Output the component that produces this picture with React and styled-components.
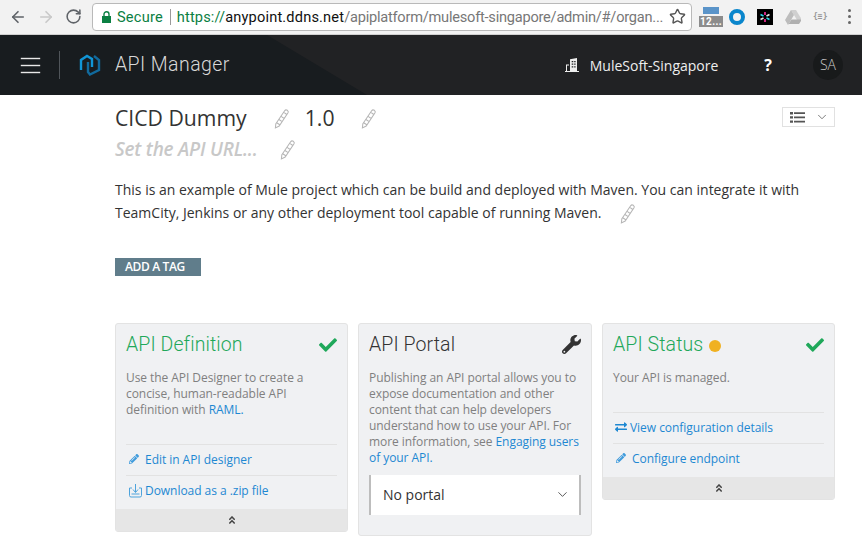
import React from "react";
import styled, { createGlobalStyle } from "styled-components";
import { ArrowLeft, ArrowRight, RotateCw, Star, ChevronDown } from "lucide-react";
import { FaCheck, FaWrench, FaExchangeAlt, FaAngleDoubleUp, FaPencilAlt } from "react-icons/fa";

const Global = createGlobalStyle`
  html, body { margin: 0; padding: 0; background: #fff; }
  body { font-family: "Open Sans", "Liberation Sans", sans-serif; width: 862px; height: 552px; overflow: hidden; }
  * { box-sizing: border-box; }
`;
const Page = styled.div`width: 862px; height: 552px; overflow: hidden; display: flex; flex-direction: column;`;
const Chrome = styled.div`height: 35px; flex: none; background: #f2f2f2; border-bottom: 1px solid #d0d0d0; display: flex; align-items: center; padding: 0 0 1px 9px;`;
const NavBtn = styled.div`width: 28px; display: flex; justify-content: flex-start; color: ${p => p.$c};`;
const Omni = styled.div`margin-left: -1px; width: 600px; height: 28px; flex: none; background: #fff; border: 1px solid #b9b9b9; border-radius: 4px; display: flex; align-items: center; padding: 0 5px 0 9px; font: 14.6px "Roboto", "Liberation Sans", sans-serif; white-space: nowrap;`;
const Secure = styled.span`color: #0b8043; margin-left: 6px; letter-spacing: .2px;`;
const Sep = styled.span`width: 1px; height: 16px; background: #9a9a9a; margin: 0 6px 0 7px;`;
const Url = styled.span`flex: 1; min-width: 0; color: #777; letter-spacing: -.23px; b { font-weight: 400; color: #111; letter-spacing: .17px; } i { font-style: normal; color: #0b8043; letter-spacing: .13px; }`;
const Exts = styled.div`display: flex; align-items: center; margin-left: 7px;`;
const Cal = styled.div`width: 24px; height: 20px; display: flex; flex-direction: column; align-items: center; margin-right: 6px;
  span { display: block; width: 16px; height: 7px; background: #5a94c9; }
  b { display: block; width: 24px; height: 11px; margin-top: 2px; background: #8c8c8c; color: #fff; font: 700 10px/11px "Roboto", sans-serif; letter-spacing: .4px; text-align: center; }`;
const ExtIcon = styled.div`width: ${p => p.$w || 16}px; height: 16px; margin-right: ${p => p.$m}px; display: flex; align-items: center; justify-content: center; svg { display: block; }`;
const ExtText = styled.span`font: 700 8px "DejaVu Sans Mono", monospace; color: #999; width: 15px; margin-right: 20px; white-space: nowrap;`;
const Dots = styled.div`display: flex; flex-direction: column; gap: 3px; span { width: 3px; height: 3px; border-radius: 50%; background: #666; }`;

const Header = styled.header`position: relative; height: 60px; flex: none; background: #212224; display: flex; align-items: center; padding: 0 19px 0 21px; color: #fff; overflow: hidden;
  &::before { content: ""; position: absolute; inset: 0; background: #181c1f; clip-path: polygon(0 0, 267px 0, 367px 60px, 0 60px); }
  > * { position: relative; }`;
const Burger = styled.div`width: 19px; display: flex; flex-direction: column; gap: 6px; span { display: block; height: 1px; background: #e8e8e8; box-shadow: 0 0 0 .2px #e8e8e8; }`;
const Divider = styled.div`width: 1px; height: 28px; background: #50555a; margin: 0 19px 0 19px;`;
const Brand = styled.div`font: 300 19.5px "Roboto", sans-serif; letter-spacing: .42px; color: #d8d8d8; margin-left: 14px; flex: 1; position: relative; top: -1px;`;
const Org = styled.div`font: 400 14px "Open Sans", sans-serif; color: #eee; margin-left: 11px;`;
const Help = styled.div`font: 700 16px "Open Sans", sans-serif; color: #fff; margin-left: 46px;`;
const Avatar = styled.div`width: 30px; height: 30px; border-radius: 50%; background: #181a1b; color: #ccc; margin-left: 41px; font: 300 14px/30px "Open Sans", sans-serif; text-align: center;`;

const Main = styled.main`padding: 0 27px 0 115px; flex: 1;`;
const TitleRow = styled.div`display: flex; align-items: center; height: 46px; position: relative;`;
const Title = styled.div`font: 400 21.2px/28px "Open Sans", sans-serif; color: #333; white-space: nowrap;`;
const Version = styled(Title)`margin-left: 14px;`;
const Pen = styled.svg`width: 19px; height: 21px; flex: none; margin-left: ${p => p.$m}px; fill: none; stroke: #b5b5b5; stroke-width: 1;`;
const Menu = styled.div`position: absolute; right: 0; top: 12px; width: 53px; height: 20px; border: 1px solid #e1e1e1; display: flex; align-items: center; gap: 10px; padding-left: 7px; color: #555;`;
const UrlRow = styled.div`display: flex; align-items: center; height: 22px; margin-top: -3px;`;
const UrlHint = styled.div`font: italic 600 18.9px/22px "Open Sans", sans-serif; color: #c8c8c8; letter-spacing: -.2px; white-space: nowrap;`;
const Desc = styled.p`margin: 18px 0 0; font: 400 14px/23px "Open Sans", sans-serif; color: #333; width: 720px; svg { vertical-align: -6px; }`;
const Tag = styled.div`margin-top: 34px; width: 86px; height: 18px; background: #607d8b; color: #fff; font: 600 12px/17px "Open Sans", sans-serif; padding-left: 10px; letter-spacing: -.35px;`;
const Cards = styled.div`display: grid; grid-template-columns: 233px 234px 233px; gap: 10px; align-items: start; margin-top: 47px; width: 720px;`;
const Card = styled.section`background: #f0f1f3; border: 1px solid #e3e3e3; border-radius: 3px; overflow: hidden;`;
const CardHead = styled.div`display: flex; align-items: center; justify-content: space-between; padding: 5px 10px 0; height: 36px;`;
const CardTitle = styled.h2`margin: 0; font: 300 19.5px/26px "Roboto", sans-serif; letter-spacing: .1px; color: ${p => p.$c}; display: flex; align-items: center; gap: 6px;`;
const Dot = styled.span`width: 12px; height: 12px; background: #f0b121; border-radius: 50%; display: block; margin-top: 2px;`;
const Body = styled.p`margin: 10px 8px 0 10px; font: 400 12px/16px "Open Sans", sans-serif; letter-spacing: -.06px; color: #808080; min-height: ${p => p.$h}px; a { color: #1e88d2; }`;
const Actions = styled.div`padding-bottom: 3px;`;
const ActionRow = styled.div`margin: 0 10px; height: 31px; border-top: 1px solid #e2e2e2; display: flex; align-items: center; gap: ${p => p.$g ?? 6}px; font: 400 12px "Open Sans", sans-serif; color: #1e88d2; padding: 0 0 2px ${p => p.$p ?? 2}px; letter-spacing: -.04px; svg { flex: none; }`;
const Collapse = styled.div`height: 22px; background: #e6e6e6; display: flex; align-items: center; justify-content: center; color: #444;`;
const Select = styled.div`margin: 9px 10px 20px; height: 40px; background: #fff; border-left: 2px solid #bdbdbd; border-right: 2px solid #bdbdbd; display: flex; align-items: center; justify-content: space-between; padding: 0 9px 2px 12px; font: 400 14px "Open Sans", sans-serif; color: #333;`;

const Pencil = ({ m }) => (
  <Pen $m={m} viewBox="0 0 18 20"><path d="M3.6 15 L12 2.6 Q13 1.2 14.6 2.2 Q16 3.3 15.2 4.6 L6.8 17.2 L3.2 19 Z M11 4 L14 6.2 M4.4 14 L7.4 16 M6.6 11 L9.6 13 M8.6 8 L11.6 10" /></Pen>
);
const GreenCheck = () => <FaCheck size={18} color="#1fa85a" />;
const Chevs = () => <FaAngleDoubleUp size={10} />;
const Logo = () => (
  <svg width="22" height="24" viewBox="0 0 22 24" fill="none" strokeWidth="2.4">
    <path d="M2 17 V7 L8 3 L13 6 V14" stroke="#1195d6" />
    <path d="M9 9 V19 L11 21.5 L20 17 V7 L15 3" stroke="#116a9d" />
  </svg>
);
const Building = () => (
  <svg width="14" height="14" viewBox="0 0 14 14" fill="#eee"><path d="M5 1.2 L12 0 V13 H5 Z M6.7 3 v1.2 h1.6 V3 Z M9.2 3 v1.2 h1.4 V3 Z M6.7 5.6 v1.2 h1.6 V5.6 Z M9.2 5.6 v1.2 h1.4 V5.6 Z M6.7 8.2 v1.2 h1.6 V8.2 Z M9.2 8.2 v1.2 h1.4 V8.2 Z" fillRule="evenodd" /><path d="M1 6.5 H4 V7.5 H2 V13 H4 V14 H1 Z M0 13 H14 V14 H0 Z" /></svg>
);
const Lock = () => (
  <svg width="9" height="12" viewBox="0 0 9 12"><path d="M0 5h9v7H0z" fill="#0b8043" /><path d="M2 5V3.2a2.5 2.5 0 0 1 5 0V5" fill="none" stroke="#0b8043" strokeWidth="1.4" /></svg>
);
const Download = () => (
  <svg width="15" height="15" viewBox="0 0 15 15" fill="none" stroke="#4da3dc"><path d="M4 5H1.5V12.5A1.5 1.5 0 0 0 3 14H12A1.5 1.5 0 0 0 13.5 12.5V5H11M7.5 1V9M5 6.5L7.5 9.5L10 6.5M3.5 11H11.5" /></svg>
);

export default function App() {
  return (
    <Page>
      <Global />
      <Chrome>
        <NavBtn $c="#5f6368"><ArrowLeft size={18} strokeWidth={2.2} /></NavBtn>
        <NavBtn $c="#c9c9c9"><ArrowRight size={18} strokeWidth={2.2} /></NavBtn>
        <NavBtn $c="#5f6368"><RotateCw size={17} strokeWidth={2.2} /></NavBtn>
        <Omni>
          <Lock />
          <Secure>Secure</Secure><Sep />
          <Url><i>https://</i><b>anypoint.ddns.net</b>/apiplatform/mulesoft-singapore/admin/#/organ...</Url>
          <Star size={17} strokeWidth={2} color="#555" style={{ flex: "none" }} />
        </Omni>
        <Exts>
          <Cal><span /><b>12...</b></Cal>
          <ExtIcon $m={12}><svg width="16" height="16"><circle cx="8" cy="8" r="6" fill="none" stroke="#0a86cc" strokeWidth="4" /></svg></ExtIcon>
          <ExtIcon $m={12}><svg width="16" height="16"><rect width="16" height="16" fill="#000" /><g strokeWidth="1.6"><path d="M8 3v3M8 10v3" stroke="#ff2fa0" /><path d="M3.5 5.5l3 1.5M9.5 9l3 1.5" stroke="#29d6e8" /><path d="M12.5 5.5l-3 1.5M6.5 9l-3 1.5" stroke="#e8e8e8" /></g></svg></ExtIcon>
          <ExtIcon $m={12}><svg width="17" height="16"><path d="M6 1h5l6 10h-5z" fill="#d0d0d0" /><path d="M6 1l3 5-6 10-3-5z" fill="#bdbdbd" /><path d="M3.5 15h10.5l3-4.5H6.5z" fill="#b0b0b0" /></svg></ExtIcon>
          <ExtText>{"{≡}"}</ExtText>
          <Dots><span /><span /><span /></Dots>
        </Exts>
      </Chrome>
      <Header>
        <Burger><span /><span /><span /></Burger>
        <Divider />
        <Logo />
        <Brand>API Manager</Brand>
        <Building />
        <Org>MuleSoft-Singapore</Org>
        <Help>?</Help>
        <Avatar>SA</Avatar>
      </Header>
      <Main>
        <TitleRow>
          <Title>CICD Dummy</Title><Pencil m={25} />
          <Version>1.0</Version><Pencil m={24} />
          <Menu>
            <svg width="15" height="11" viewBox="0 0 15 11" fill="#555"><path d="M0 0h3v2.4H0zM4 .3h11v1.8H4zM0 4.2h3v2.4H0zM4 4.5h11v1.8H4zM0 8.4h3v2.4H0zM4 8.7h11v1.8H4z" /></svg>
            <ChevronDown size={14} strokeWidth={1.3} />
          </Menu>
        </TitleRow>
        <UrlRow><UrlHint>Set the API URL...</UrlHint><Pencil m={20} /></UrlRow>
        <Desc>This is an example of Mule project which can be build and deployed with Maven. You can integrate it with<br />TeamCity, Jenkins or any other deployment tool capable of running Maven. <Pencil m={13} /></Desc>
        <Tag>ADD A TAG</Tag>
        <Cards>
          <Card>
            <CardHead><CardTitle $c="#1fa85a">API Definition</CardTitle><GreenCheck /></CardHead>
            <Body $h={74}>Use the API Designer to create a concise, human-readable API definition with <a>RAML.</a></Body>
            <Actions>
              <ActionRow $p={3} $g={6}><FaPencilAlt size={10} color="#3f9bdc" />Edit in API designer</ActionRow>
              <ActionRow $p={2} $g={2}><Download />Download as a .zip file</ActionRow>
            </Actions>
            <Collapse><Chevs /></Collapse>
          </Card>
          <Card>
            <CardHead><CardTitle $c="#333">API Portal</CardTitle><FaWrench size={19} color="#333" /></CardHead>
            <Body>Publishing an API portal allows you to expose documentation and other content that can help developers understand how to use your API. For more information, see <a>Engaging users of your API.</a></Body>
            <Select>No portal<ChevronDown size={15} strokeWidth={1.3} /></Select>
          </Card>
          <Card>
            <CardHead><CardTitle $c="#1fa85a">API Status<Dot /></CardTitle><GreenCheck /></CardHead>
            <Body $h={42}>Your API is managed.</Body>
            <Actions>
              <ActionRow $p={2} $g={3}><FaExchangeAlt size={12} color="#1e88d2" />View configuration details</ActionRow>
              <ActionRow $p={3} $g={6}><FaPencilAlt size={10} color="#3f9bdc" />Configure endpoint</ActionRow>
            </Actions>
            <Collapse><Chevs /></Collapse>
          </Card>
        </Cards>
      </Main>
    </Page>
  );
}
